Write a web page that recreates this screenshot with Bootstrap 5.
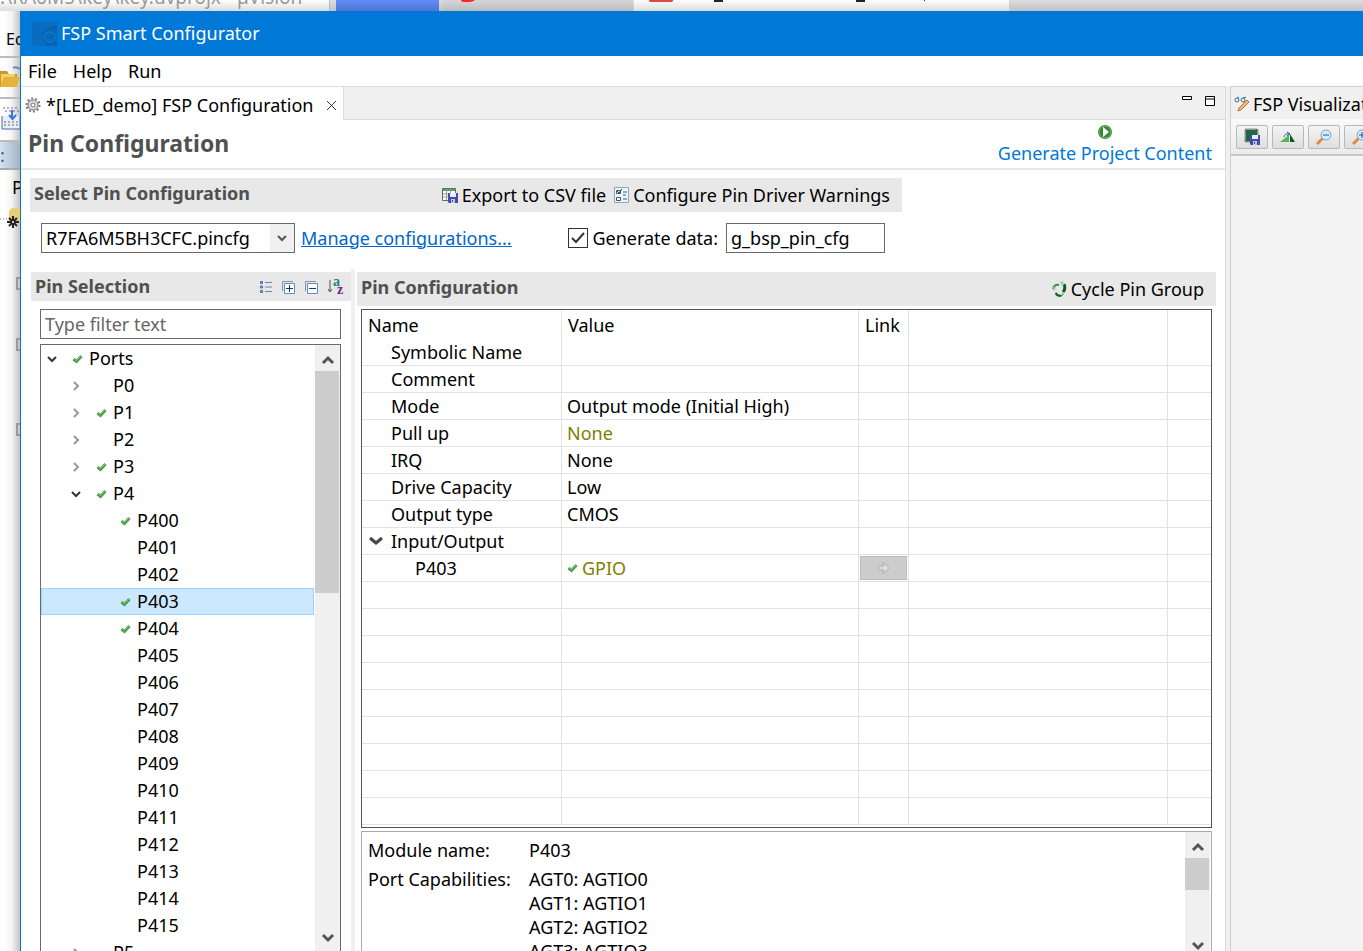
<!DOCTYPE html>
<html lang="en">
<head>
<meta charset="utf-8">
<meta name="viewport" content="width=device-width, initial-scale=1">
<title>FSP Smart Configurator</title>
<link rel="stylesheet" href="https://cdn.jsdelivr.net/npm/bootstrap@5.3.0/dist/css/bootstrap.min.css">
<style>
  body { font-family: "Noto Sans", "Segoe UI", sans-serif; font-size: 18px; line-height: 27px; color: #000; background: #fff; }
  svg { flex: none; display: block; }
  .min-0 { min-width: 0; min-height: 0; }
  button { color: inherit; }
  .plain-btn { background: none; border: 0; padding: 0; }
  .plain-link { color: #000; text-decoration: none; }

  /* windows lying behind the configurator */
  .desk-top { height: 11px; background: linear-gradient(#dddee0, #bfc1c3); }
  .desk-title { width: 330px; font-size: 19px; color: #999; background: linear-gradient(#fff, #dcdcdc); border-right: 1px solid #bbb; }
  .desk-blue { width: 103px; margin-left: 6px; background: linear-gradient(#628cf8, #4f76d2); }
  .desk-grey { width: 190px; margin-left: 4px; padding-left: 15px; background: linear-gradient(#d6d7da, #babcbe); }
  .desk-doc { width: 375px; margin-left: 1px; padding-left: 15px; background: linear-gradient(#fdfdfd, #dcdcdc); }
  .desk-left { width: 20px; background: linear-gradient(90deg, #fff 20%, #f3f3f3 60%, #c4c4c4); }
  .desk-menu { font-size: 16px; padding: 15px 0 2px 6px; }
  .desk-band { height: 30px; color: #2a5fa8; background: linear-gradient(90deg, #d5e2ef, #a5b3c2); border-top: 2px solid #bbb; border-bottom: 2px solid #aaa; }
  .desk-box { width: 4px; height: 13px; border: 2px solid #999; border-right: 0; }

  .app-win { border-left: 1px solid #0078d7; background: #f0f0f0; }
  .app-title { height: 45px; padding-left: 11px; background: #0078d7; color: #fff; }
  .app-menu { height: 30px; padding-left: 7px; background: #fff; }
  .editor { border: solid #dcdcdc; border-width: 1px 1px 0 0; }
  .viz { width: 133px; border: solid #d0d0d0; border-width: 1px 0 0 1px; background: #f3f3f3; }
  .tab-strip { height: 33px; border-bottom: 1px solid #dcdcdc; background: #f0f0f0; }
  .tab-on { height: 33px; width: 323px; padding: 3px 0 0 4px; border-right: 1px solid #dcdcdc; background: #fff; }
  .win-btns { padding-right: 9px; }
  .form-head { height: 50px; padding: 2px 13px 0 7px; border-bottom: 2px solid #e8e8e8; background: #fff; }
  .form-head h1 { font-size: 23px; line-height: 27px; font-weight: 700; color: #505050; }
  .gen-link { color: #0078d7; }
  .sect-bar { background: #e8e8e8; padding: 0 12px 0 4px; }
  .sect-bar h2 { font-size: 18px; line-height: 27px; font-weight: 700; color: #505050; margin: 0; }
  .select-sect { max-width: 872px; margin: 8px 0 0 9px; }
  .tall-bar { height: 34px; }
  .low-bar { height: 29px; padding-right: 7px; }

  .box { font-size: inherit; line-height: 27px; height: 30px; border: 1px solid #6a6a6a; border-radius: 0; padding: 0 4px; color: #000; background-color: #fff; }
  .box:focus { outline: 1px solid #0078d7; }
  .select-row { padding: 11px 17px 0 11px; }
  .cfg-select { appearance: none; width: 254px; background: #fff url("data:image/svg+xml,%3Csvg xmlns='http://www.w3.org/2000/svg' width='24' height='28'%3E%3Cpath fill='%23f0f0f0' d='M0 0h24v28H0z'/%3E%3Cpath fill='none' stroke='%23555' stroke-width='2' d='M8 12l4 4 4-4'/%3E%3C/svg%3E") no-repeat right; }
  .cfg-check { appearance: none; width: 20px; height: 20px; margin: 0; border: 1px solid #333; background: #fff; }
  .cfg-check:checked { background: #fff url("data:image/svg+xml,%3Csvg xmlns='http://www.w3.org/2000/svg' width='18' height='18'%3E%3Cpath fill='none' stroke='%23333' stroke-width='2' d='M3 9l4 4 8-9'/%3E%3C/svg%3E") no-repeat center; }
  .data-name { width: 159px; }
  .manage { color: #0066cc; margin-left: 6px; }

  .split { padding-right: 9px; }
  .pin-pane { width: 334px; border-right: 4px solid #f0f0f0; }
  .pin-pane .sect-bar { margin: 3px 0 0 10px; }
  .filter-box { margin: 8px 10px 5px 19px; }
  .filter-box::placeholder { color: #666; opacity: 1; }
  .tree-frame { margin: 0 10px 0 19px; border: 1px solid #6a6a6a; border-bottom: 0; }
  .tree-row { height: 27px; border: 1px solid transparent; margin-right: 1px; }
  .tree-row > span { width: 24px; flex: none; display: flex; justify-content: center; }
  .tree-row.l1 { padding-left: 24px; }
  .tree-row.l2 { padding-left: 48px; }
  .tree-row > span:first-child { width: 23px; justify-content: start; padding-left: 4px; }
  .tree-row.picked { background: #cce8ff; border-color: #99d1ff; }
  .scroll-bar { width: 25px; background: #f0f0f0; }
  .scroll-bar button { height: 26px; }
  .thumb { background: #cdcdcd; width: 24px; }

  .conf-pane { padding-left: 2px; }
  .conf-pane .sect-bar { margin-top: 3px; }
  .grid-frame { margin: 3px 4px 3px; border: 1px solid #555; padding-bottom: 2px; }
  .prop-grid { table-layout: fixed; width: 100%; border-collapse: separate; border-spacing: 0; }
  .prop-grid th { height: 29px; padding: 2px 6px 0; font-weight: 400; border-right: 1px solid #e2e2e2; }
  .prop-grid td { height: 27px; line-height: 26px; padding: 0 5px; white-space: nowrap; border: solid #e2e2e2; border-width: 0 1px 1px 0; }
  .prop-grid tr > :last-child { border-right: 0; }
  .prop-grid td:first-child { padding-left: 29px; }
  .prop-grid .sub td:first-child { padding-left: 53px; }
  .prop-grid .group-row td:first-child { padding-left: 7px; }
  .prop-grid .link-cell { padding: 1px; }
  .go-btn { width: 100%; height: 24px; border: 1px solid #bfbfbf; background: #ccc; padding: 0; }
  .olive { color: #808000; }
  .detail { margin: 0 4px; border: 1px solid #aaa; border-bottom: 0; padding-right: 1px; }
  .detail-text { padding: 5px 0 0 6px; }
  .detail-text dl { grid-template-columns: 161px 1fr; display: grid; row-gap: 2px; margin: 0; }
  .detail-text dt { font-weight: 400; }
  .detail-text dd { margin: 0; }
  .caps { line-height: 24px; padding-top: 1px; }

  .viz-tab { height: 32px; padding: 3px 0 0 3px; gap: 3px; background: #f0f0f0; }
  .viz-tools { height: 37px; padding: 0 5px; gap: 4px; background: linear-gradient(#fafafa, #ececec); border-bottom: 2px solid #c8c8c8; }
  .tool-btn { width: 32px; height: 24px; flex: none; padding: 0; border: 1px solid #b8b8b8; border-radius: 2px; background: linear-gradient(#f4f4f4, #dedede); display: flex; align-items: center; justify-content: center; }
</style>
</head>
<body class="vh-100 overflow-hidden d-flex flex-column">

<svg width="0" height="0" class="position-absolute" aria-hidden="true">
  <symbol id="tick" viewBox="0 0 11 10"><path d="M1.500 5l3 2.500L9.500 2" fill="none" stroke="#4a9a4a" stroke-width="3"/><path d="M2 4.500l2.500 2L9 2" fill="none" stroke="#86c886" stroke-width="1"/></symbol>
  <symbol id="open" viewBox="0 0 12 10"><path d="M2 3l4 4 4-4" fill="none" stroke="#333" stroke-width="2"/></symbol>
  <symbol id="shut" viewBox="0 0 12 10"><path d="M4 1l4 4-4 4" fill="none" stroke="#999" stroke-width="2"/></symbol>
  <symbol id="up" viewBox="0 0 14 10"><path d="M2 8l5-5 5 5" fill="none" stroke="#555" stroke-width="3"/></symbol>
  <symbol id="down" viewBox="0 0 14 10"><path d="M2 2l5 5 5-5" fill="none" stroke="#555" stroke-width="3"/></symbol>
  <symbol id="disk" viewBox="0 0 10 10"><path d="M0 0h10v10H1L0 9z" fill="#4848a8"/><path d="M2 0h6v4H2z" fill="#e8ecff"/><path d="M3 6h4v4H3z" fill="#c0c4e8"/><path d="M4 7h1v2H4z" fill="#4848a8"/></symbol>
</svg>

<div class="desk-top d-flex flex-shrink-0 overflow-hidden" aria-hidden="true">
  <div class="desk-title d-flex align-items-end overflow-hidden text-nowrap">:\RA6M5\key\key.uvprojx - µVision</div>
  <div class="desk-blue"></div>
  <div class="desk-grey"><svg width="20" height="3"><path d="M3 0h14q-2 2-6 2H7Q3 2 3 0" fill="#f22"/></svg></div>
  <div class="desk-doc d-flex"><svg width="300" height="3"><path d="M0 0h24v1l-1 1H1L0 1z" fill="#e04848"/><path d="M65 1h9M207 1h9M275 0h1" stroke="#222" stroke-width="2"/></svg></div>
</div>

<div class="d-flex flex-fill min-0">
  <div class="desk-left overflow-hidden flex-shrink-0" aria-hidden="true">
    <div class="desk-menu text-nowrap">Edit</div>
    <svg width="20" height="42"><path d="M0 2h20M0 43h20" stroke="#bbb" stroke-width="2"/><path d="M0 16h7l2 3h8v13H0z" fill="#c9992e"/><path d="M1 19h14l-1 12H1z" fill="#f2cf69"/><path d="M4 22h16l-3 10H0z" fill="#e6b33a"/><path d="M13 13q3-2 7 1" fill="none" stroke="#6a86b0" stroke-width="2"/></svg>
    <svg width="20" height="43"><path d="M0 1h20" stroke="#bbb" stroke-width="2"/><path d="M2 19v13h18V19" fill="#e8edf7" stroke="#4a6aa0"/><path d="M3 11h16M5 14h14M4 25h16M4 28h16" stroke="#667" stroke-dasharray="2 2"/><path d="M12 13v8M9 18l3.500 4 3.500-4" fill="none" stroke="#3b74dd" stroke-width="2"/></svg>
    <div class="desk-band">:</div>
    <div class="ps-2 ms-1 pt-1">P</div>
    <svg width="20" height="28"><path d="M0 18h8" stroke="#777" stroke-dasharray="1 2"/><path d="M9 10l3-3h8v14H9z" fill="#e7ce78"/><g stroke="#222" stroke-width="2"><path d="M13 15v12M7 21h12M9 17l8 8M17 17l-8 8"/></g><circle cx="13" cy="21" r="1" fill="#fff"/></svg>
    <div class="d-flex flex-column align-items-end pt-5 gap-5">
      <div class="desk-box"></div><div class="desk-box"></div><div class="desk-box mt-4"></div>
    </div>
  </div>

  <div class="app-win d-flex flex-column flex-fill min-0">
    <header class="app-title d-flex align-items-center gap-1 flex-shrink-0">
      <svg width="25" height="24"><path d="M0 0h25v24H0z" fill="#086cc0"/><path d="M25 3l-7 2-4 3-5 3 3 2-1 5 3 6h11z" fill="#0a63b0"/><circle cx="18" cy="15" r="5" fill="none" stroke="#0878d0" stroke-width="2"/><path d="M20 12q-5-1-4 2 4 0 4 3-2 2-5 0" fill="none" stroke="#0874cc" stroke-width="1"/></svg>
      <span>FSP Smart Configurator</span>
    </header>
    <nav class="app-menu d-flex align-items-center gap-3 flex-shrink-0">
      <a class="plain-link" href="#">File</a><a class="plain-link" href="#">Help</a><a class="plain-link" href="#">Run</a>
    </nav>

    <div class="d-flex flex-fill min-0 gap-1">
      <main class="editor d-flex flex-column flex-fill min-0 bg-white">
        <div class="tab-strip d-flex justify-content-between flex-shrink-0">
          <div class="tab-on d-flex align-items-center text-nowrap">
            <svg width="17" height="16" viewBox="0 0 17 16"><circle cx="8" cy="8" r="6.500" fill="none" stroke="#777" stroke-width="2" stroke-dasharray="2 2"/><circle cx="8" cy="8" r="5" fill="#ddd" stroke="#777"/><circle cx="8" cy="8" r="2" fill="#fff" stroke="#777"/></svg>
            <span class="ms-1">*[LED_demo] FSP Configuration</span>
            <button class="plain-btn ms-2 ps-1" aria-label="Close tab"><svg width="11" height="11"><path d="M1 1l9 9M10 1l-9 9" stroke="#333"/></svg></button>
          </div>
          <div class="win-btns d-flex gap-2 align-items-center pb-2">
            <button class="plain-btn" aria-label="Minimize"><svg width="16" height="18"><path d="M2.500 6.500h9v3h-9z" fill="#fff" stroke="#000"/></svg></button>
            <button class="plain-btn" aria-label="Maximize"><svg width="12" height="18"><path d="M1.500 6.500h9v9h-9zM1 9h10" fill="#fff" stroke="#000"/></svg></button>
          </div>
        </div>

        <div class="form-head d-flex justify-content-between align-items-center flex-shrink-0">
          <h1 class="m-0 pb-1">Pin Configuration</h1>
          <button class="plain-btn gen-link d-flex flex-column align-items-center">
            <svg width="16" height="16"><circle cx="8" cy="8" r="7" fill="#2f8a3c"/><circle cx="8" cy="8" r="6" fill="none" stroke="#7cba5a"/><path d="M6 3v10l6-5z" fill="#fff"/></svg>
            <span>Generate Project Content</span>
          </button>
        </div>

        <section class="select-sect flex-shrink-0">
          <div class="sect-bar tall-bar d-flex align-items-center">
            <h2 class="me-auto pb-1">Select Pin Configuration</h2>
            <button class="plain-btn d-flex align-items-center gap-1">
              <svg width="17" height="16"><path d="M1.500 1.500h13v12h-13z" fill="#fff" stroke="#667"/><path d="M2 2h12v2H2z" fill="#4fa64f"/><path d="M2 7h12M2 10h12M5.500 2v11M9.500 2v11" stroke="#8aa88a"/><use href="#disk" x="7" y="6" width="10" height="10"/></svg>
              <span>Export to CSV file</span>
            </button>
            <button class="plain-btn d-flex align-items-center gap-1 ms-2">
              <svg width="15" height="16"><path d="M.5.5h14v15H.5z" fill="#eef5fc" stroke="#8aa6c4"/><path d="M2.500 3.500h4v3h-4zM2.500 10.500h4v3h-4z" fill="#fff" stroke="#456"/><path d="M9 5h4M9 8h3M9 12h4" stroke="#2b5a9a"/><path d="M3 4l2 2 3-4" fill="none" stroke="#345"/></svg>
              <span>Configure Pin Driver Warnings</span>
            </button>
          </div>
          <div class="select-row d-flex align-items-center">
            <select class="box cfg-select" aria-label="Pin configuration file"><option>R7FA6M5BH3CFC.pincfg</option></select>
            <a class="manage" href="#">Manage configurations...</a>
            <div class="d-flex align-items-center ms-auto gap-1">
              <input class="cfg-check" type="checkbox" id="gen" checked>
              <label class="me-1" for="gen">Generate data:</label>
              <input class="box data-name" type="text" value="g_bsp_pin_cfg" aria-label="Data name">
            </div>
          </div>
        </section>

        <div class="split d-flex flex-fill min-0 mt-3">
          <section class="pin-pane d-flex flex-column flex-shrink-0 min-0">
            <div class="sect-bar low-bar d-flex align-items-center gap-2 flex-shrink-0">
              <h2 class="me-auto">Pin Selection</h2>
              <button class="plain-btn" aria-label="List"><svg width="14" height="14"><path d="M1.500 1.500h2v2h-2zM1.500 6h2v2h-2zM1.500 10.500h2v2h-2z" fill="#9ab" stroke="#4a6fb0"/><path d="M6 2.500h7M6 7h7M6 11.500h7" stroke="#6b86b4"/></svg></button>
              <button class="plain-btn" aria-label="Expand all"><svg width="15" height="14"><path d="M1.500 11V1.500H12" fill="none" stroke="#7a96b8"/><path d="M3.500 3.500h10v10h-10z" fill="#fff" stroke="#6a88b0"/><path d="M5 8.500h7M8.500 5v7" stroke="#046"/></svg></button>
              <button class="plain-btn" aria-label="Collapse all"><svg width="15" height="14"><path d="M1.500 11V1.500H12" fill="none" stroke="#7a96b8"/><path d="M3.500 3.500h10v10h-10z" fill="#fff" stroke="#6a88b0"/><path d="M5 8.500h7" stroke="#046"/></svg></button>
              <button class="plain-btn" aria-label="Sort"><svg width="17" height="18"><path d="M3 2v11M1 11l2 3 2-3" fill="none" stroke="#456"/><text x="6" y="8" font-family="Liberation Serif, serif" font-weight="700" font-size="14" fill="#1c8080">a</text><text x="10" y="16" font-family="Liberation Serif, serif" font-weight="700" font-size="14" fill="#7a1f8a">z</text></svg></button>
            </div>
            <input class="box filter-box flex-shrink-0" type="text" placeholder="Type filter text" aria-label="Filter">
            <div class="tree-frame d-flex flex-fill min-0 overflow-hidden">
              <ul class="list-unstyled m-0 flex-fill overflow-hidden">
                <li class="tree-row d-flex align-items-center"><span><svg width="12" height="10"><use href="#open"/></svg></span><span><svg width="11" height="10"><use href="#tick"/></svg></span>Ports</li>
                <li class="tree-row l1 d-flex align-items-center"><span><svg width="12" height="10"><use href="#shut"/></svg></span><span></span>P0</li>
                <li class="tree-row l1 d-flex align-items-center"><span><svg width="12" height="10"><use href="#shut"/></svg></span><span><svg width="11" height="10"><use href="#tick"/></svg></span>P1</li>
                <li class="tree-row l1 d-flex align-items-center"><span><svg width="12" height="10"><use href="#shut"/></svg></span><span></span>P2</li>
                <li class="tree-row l1 d-flex align-items-center"><span><svg width="12" height="10"><use href="#shut"/></svg></span><span><svg width="11" height="10"><use href="#tick"/></svg></span>P3</li>
                <li class="tree-row l1 d-flex align-items-center"><span><svg width="12" height="10"><use href="#open"/></svg></span><span><svg width="11" height="10"><use href="#tick"/></svg></span>P4</li>
                <li class="tree-row l2 d-flex align-items-center"><span></span><span><svg width="11" height="10"><use href="#tick"/></svg></span>P400</li>
                <li class="tree-row l2 d-flex align-items-center"><span></span><span></span>P401</li>
                <li class="tree-row l2 d-flex align-items-center"><span></span><span></span>P402</li>
                <li class="tree-row l2 picked d-flex align-items-center"><span></span><span><svg width="11" height="10"><use href="#tick"/></svg></span>P403</li>
                <li class="tree-row l2 d-flex align-items-center"><span></span><span><svg width="11" height="10"><use href="#tick"/></svg></span>P404</li>
                <li class="tree-row l2 d-flex align-items-center"><span></span><span></span>P405</li>
                <li class="tree-row l2 d-flex align-items-center"><span></span><span></span>P406</li>
                <li class="tree-row l2 d-flex align-items-center"><span></span><span></span>P407</li>
                <li class="tree-row l2 d-flex align-items-center"><span></span><span></span>P408</li>
                <li class="tree-row l2 d-flex align-items-center"><span></span><span></span>P409</li>
                <li class="tree-row l2 d-flex align-items-center"><span></span><span></span>P410</li>
                <li class="tree-row l2 d-flex align-items-center"><span></span><span></span>P411</li>
                <li class="tree-row l2 d-flex align-items-center"><span></span><span></span>P412</li>
                <li class="tree-row l2 d-flex align-items-center"><span></span><span></span>P413</li>
                <li class="tree-row l2 d-flex align-items-center"><span></span><span></span>P414</li>
                <li class="tree-row l2 d-flex align-items-center"><span></span><span></span>P415</li>
                <li class="tree-row l1 d-flex align-items-center"><span><svg width="12" height="10"><use href="#shut"/></svg></span><span></span>P5</li>
              </ul>
              <div class="scroll-bar d-flex flex-column flex-shrink-0">
                <button class="plain-btn d-flex align-items-center pt-1 justify-content-center" aria-label="Scroll up"><svg width="14" height="10"><use href="#up"/></svg></button>
                <div class="flex-fill"><div class="thumb" style="height:40%"></div></div>
                <button class="plain-btn d-flex align-items-center justify-content-center" aria-label="Scroll down"><svg width="14" height="10"><use href="#down"/></svg></button>
              </div>
            </div>
          </section>

          <section class="conf-pane d-flex flex-column flex-fill min-0">
            <div class="sect-bar tall-bar d-flex align-items-center flex-shrink-0">
              <h2 class="me-auto pb-1">Pin Configuration</h2>
              <button class="plain-btn d-flex align-items-center gap-1">
                <svg width="16" height="16"><path d="M2 8Q3 3 8 4" fill="none" stroke="#3a8a3a" stroke-width="2"/><path d="M1 6h4L3 10z" fill="#8fc08f"/><path d="M13 3q2 5-1 8" fill="none" stroke="#0b5c1c" stroke-width="3"/><path d="M9 1l3-1 1 4-2 1z" fill="#a8c8a8"/><path d="M5 11q2 3 6 3l-1 2q-5 0-6-3z" fill="#0f6a20"/><path d="M11 12l2 1-2 2z" fill="#5aa05a"/></svg>
                <span>Cycle Pin Group</span>
              </button>
            </div>
            <div class="grid-frame flex-shrink-0">
              <table class="prop-grid">
                <colgroup><col style="width:200px"><col style="width:297px"><col style="width:50px"><col><col style="width:43px"></colgroup>
                <thead><tr><th>Name</th><th>Value</th><th>Link</th><th></th><th></th></tr></thead>
                <tbody>
                  <tr><td>Symbolic Name</td><td></td><td></td><td></td><td></td></tr>
                  <tr><td>Comment</td><td></td><td></td><td></td><td></td></tr>
                  <tr><td>Mode</td><td>Output mode (Initial High)</td><td></td><td></td><td></td></tr>
                  <tr><td>Pull up</td><td class="olive">None</td><td></td><td></td><td></td></tr>
                  <tr><td>IRQ</td><td>None</td><td></td><td></td><td></td></tr>
                  <tr><td>Drive Capacity</td><td>Low</td><td></td><td></td><td></td></tr>
                  <tr><td>Output type</td><td>CMOS</td><td></td><td></td><td></td></tr>
                  <tr class="group-row"><td><div class="d-flex align-items-center gap-2"><svg width="14" height="10"><path d="M1 2l6 5 6-5" fill="none" stroke="#444" stroke-width="3"/></svg>Input/Output</div></td><td></td><td></td><td></td><td></td></tr>
                  <tr class="sub"><td>P403</td><td class="olive"><div class="d-flex align-items-center gap-1"><svg width="11" height="10"><use href="#tick"/></svg>GPIO</div></td><td class="link-cell"><button class="go-btn d-flex align-items-center justify-content-center" aria-label="Go to link"><svg width="14" height="14"><path d="M1.500 5h5V1.500L12.500 7l-6 5.500V9h-5z" fill="#ddd" stroke="#b0b0b0"/></svg></button></td><td></td><td></td></tr>
                  <tr><td></td><td></td><td></td><td></td><td></td></tr>
                  <tr><td></td><td></td><td></td><td></td><td></td></tr>
                  <tr><td></td><td></td><td></td><td></td><td></td></tr>
                  <tr><td></td><td></td><td></td><td></td><td></td></tr>
                  <tr><td></td><td></td><td></td><td></td><td></td></tr>
                  <tr><td></td><td></td><td></td><td></td><td></td></tr>
                  <tr><td></td><td></td><td></td><td></td><td></td></tr>
                  <tr><td></td><td></td><td></td><td></td><td></td></tr>
                  <tr><td></td><td></td><td></td><td></td><td></td></tr>
                </tbody>
              </table>
            </div>
            <div class="detail d-flex flex-fill min-0 overflow-hidden">
              <div class="detail-text flex-fill overflow-hidden">
                <dl>
                  <dt>Module name:</dt><dd>P403</dd>
                  <dt>Port Capabilities:</dt>
                  <dd class="caps">AGT0: AGTIO0<br>AGT1: AGTIO1<br>AGT2: AGTIO2<br>AGT3: AGTIO3</dd>
                </dl>
              </div>
              <div class="scroll-bar d-flex flex-column flex-shrink-0">
                <button class="plain-btn d-flex align-items-center pt-1 justify-content-center" aria-label="Scroll up"><svg width="14" height="10"><use href="#up"/></svg></button>
                <div class="flex-fill"><div class="thumb" style="height:32px"></div></div>
                <button class="plain-btn d-flex align-items-end justify-content-center flex-shrink-0" aria-label="Scroll down"><svg width="14" height="10"><use href="#down"/></svg></button>
              </div>
            </div>
          </section>
        </div>
      </main>

      <aside class="viz d-flex flex-column flex-shrink-0 overflow-hidden">
        <div class="viz-tab d-flex align-items-center text-nowrap flex-shrink-0">
          <svg width="16" height="17"><g fill="none" stroke="#456a90"><circle cx="3" cy="4" r="2"/><circle cx="9" cy="4" r="2"/><path d="M3 2l2-1M9 2l3-1"/></g><path d="M13 4l2 2-8 8-3 1 1-3z" fill="#f3b96b" stroke="#b87a3a"/></svg>
          <span>FSP Visualization</span>
        </div>
        <div class="viz-tools d-flex align-items-center flex-shrink-0">
          <button class="tool-btn" aria-label="Save package"><svg width="18" height="17"><path d="M2.500 1.500h12v12h-12z" fill="none" stroke="#333" stroke-width="2" stroke-dasharray="1 1"/><path d="M3 2h11v11H3z" fill="#1c6b45"/><use href="#disk" x="7" y="7" width="10" height="10"/></svg></button>
          <button class="tool-btn" aria-label="Rotate"><svg width="16" height="14"><path d="M0 12h9V5z" fill="#4db84d"/><path d="M10 12V4l5 8z" fill="#0b5c1c"/><path d="M4 7q1-4 5-3M7 2l3 2-3 2" fill="none" stroke="#2358a8"/></svg></button>
          <button class="tool-btn" aria-label="Zoom out"><svg width="17" height="16"><path d="M7 9l-6 6" stroke="#e08a3c" stroke-width="3"/><circle cx="10" cy="6" r="5" fill="#d6ecfc" stroke="#6da6dc"/><path d="M7 6h6" stroke="#1c5a9a" stroke-width="1"/></svg></button>
          <button class="tool-btn" aria-label="Zoom in"><svg width="17" height="16"><path d="M7 9l-6 6" stroke="#e08a3c" stroke-width="3"/><circle cx="10" cy="6" r="5" fill="#d6ecfc" stroke="#6da6dc"/><path d="M7 6h6M10 3v6" stroke="#1c5a9a" stroke-width="1"/></svg></button>
        </div>
      </aside>
    </div>
  </div>
</div>

<script src="https://cdn.jsdelivr.net/npm/bootstrap@5.3.0/dist/js/bootstrap.bundle.min.js"></script>
</body>
</html>
